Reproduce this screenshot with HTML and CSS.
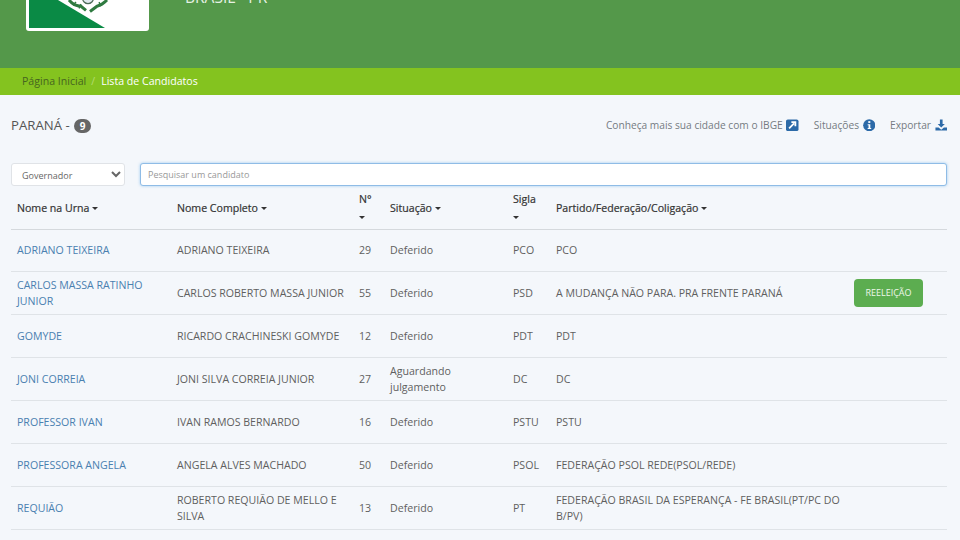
FILE: index.html
```html
<!DOCTYPE html>
<html lang="pt-BR">

<head>
    <meta charset="UTF-8">
    <title>Lista de Candidatos</title>
    <link rel="stylesheet" href="styles.css">
</head>

<body>
    <div class="viewport">
        <header class="top-header">
            <div class="flag-box">
                <svg class="flag" viewBox="0 0 117 27" preserveAspectRatio="none">
                    <rect width="117" height="27" fill="#fff"/>
                    <polygon points="0,0 29,0 76,27 0,27" fill="#0a8a45"/>
                    <path d="M40 0 Q45 6 52 6 L57 10 M78 0 Q73 5 68 6 L61 11" fill="none" stroke="#2f7a40" stroke-width="3"/>
                    <path d="M44 5l3-3M50 8l2-4M72 6l-2-4" fill="none" stroke="#2f7a40" stroke-width="1.5"/>
                    <circle cx="59" cy="-2" r="5.5" fill="#dfe8ee" stroke="#4d6b58" stroke-width="1.2"/>
                </svg>
            </div>
            <div class="header-title">BRASIL - PR</div>
        </header>

        <nav class="crumbs">
            <a class="crumb" href="#">Página Inicial</a>
            <span class="crumb-sep">/</span>
            <span class="crumb-active">Lista de Candidatos</span>
        </nav>

        <main class="content">
            <div class="title-row">
                <h1 class="state-title">PARANÁ - <span class="count-badge">9</span></h1>
                <div class="links">
                    <a class="link-item" href="#">Conheça mais sua cidade com o IBGE
                        <svg class="icon" viewBox="0 0 14 14"><rect width="14" height="13" y="0.5" rx="2" fill="#2c6aa8"/><path d="M3.5 10.5 9 5M6 3.5h4.5V8" stroke="#fff" stroke-width="2" fill="none"/></svg>
                    </a>
                    <a class="link-item" href="#">Situações
                        <svg class="icon" viewBox="0 0 14 14"><circle cx="7" cy="7" r="6.8" fill="#2c6aa8"/><rect x="5.9" y="2.4" width="2.3" height="2" fill="#fff"/><path d="M5.2 5.8h3v4.2h1v1.2H5.2V10h1V7h-1z" fill="#fff"/></svg>
                    </a>
                    <a class="link-item" href="#">Exportar
                        <svg class="icon" viewBox="0 0 14 14"><path d="M5.5 0.5h3v5H11L7 9.5 3 5.5h2.5z" fill="#2c6aa8"/><path d="M0.5 9.5h3.5l3 2.5 3-2.5h3.5v3.5H0.5z" fill="#2c6aa8"/></svg>
                    </a>
                </div>
            </div>

            <div class="filter-row">
                <select class="filter-select">
                    <option>Governador</option>
                </select>
                <input class="search-input" type="text" placeholder="Pesquisar um candidato">
            </div>

            <table class="cand-table">
                <thead>
                    <tr>
                        <th class="col-urna">Nome na Urna <span class="caret"></span></th>
                        <th class="col-nome">Nome Completo <span class="caret"></span></th>
                        <th class="col-num">N° <span class="caret"></span></th>
                        <th class="col-sit">Situação <span class="caret"></span></th>
                        <th class="col-sigla">Sigla <span class="caret"></span></th>
                        <th class="col-partido">Partido/Federação/Coligação <span class="caret"></span></th>
                        <th class="col-extra"></th>
                    </tr>
                </thead>
                <tbody>
                    <tr>
                        <td><a href="#">ADRIANO TEIXEIRA</a></td>
                        <td>ADRIANO TEIXEIRA</td>
                        <td>29</td>
                        <td>Deferido</td>
                        <td>PCO</td>
                        <td>PCO</td>
                        <td></td>
                    </tr>
                    <tr>
                        <td><a href="#">CARLOS MASSA RATINHO JUNIOR</a></td>
                        <td>CARLOS ROBERTO MASSA JUNIOR</td>
                        <td>55</td>
                        <td>Deferido</td>
                        <td>PSD</td>
                        <td>A MUDANÇA NÃO PARA. PRA FRENTE PARANÁ</td>
                        <td><span class="tag-reeleicao">REELEIÇÃO</span></td>
                    </tr>
                    <tr>
                        <td><a href="#">GOMYDE</a></td>
                        <td>RICARDO CRACHINESKI GOMYDE</td>
                        <td>12</td>
                        <td>Deferido</td>
                        <td>PDT</td>
                        <td>PDT</td>
                        <td></td>
                    </tr>
                    <tr>
                        <td><a href="#">JONI CORREIA</a></td>
                        <td>JONI SILVA CORREIA JUNIOR</td>
                        <td>27</td>
                        <td>Aguardando julgamento</td>
                        <td>DC</td>
                        <td>DC</td>
                        <td></td>
                    </tr>
                    <tr>
                        <td><a href="#">PROFESSOR IVAN</a></td>
                        <td>IVAN RAMOS BERNARDO</td>
                        <td>16</td>
                        <td>Deferido</td>
                        <td>PSTU</td>
                        <td>PSTU</td>
                        <td></td>
                    </tr>
                    <tr>
                        <td><a href="#">PROFESSORA ANGELA</a></td>
                        <td>ANGELA ALVES MACHADO</td>
                        <td>50</td>
                        <td>Deferido</td>
                        <td>PSOL</td>
                        <td>FEDERAÇÃO PSOL REDE(PSOL/REDE)</td>
                        <td></td>
                    </tr>
                    <tr>
                        <td><a href="#">REQUIÃO</a></td>
                        <td>ROBERTO REQUIÃO DE MELLO E SILVA</td>
                        <td>13</td>
                        <td>Deferido</td>
                        <td>PT</td>
                        <td>FEDERAÇÃO BRASIL DA ESPERANÇA - FE BRASIL(PT/PC DO B/PV)</td>
                        <td></td>
                    </tr>
                </tbody>
            </table>
        </main>
    </div>
</body>

</html>
```

FILE: styles.css
```css
* {
    margin: 0;
    padding: 0;
    box-sizing: border-box;
}

html, body {
    height: 100%;
    overflow: hidden;
}

body {
    font-family: 'Open Sans', sans-serif;
    font-size: 10.6px;
    color: #5f5f5f;
    background: #f4f7fb;
}

.viewport {
    height: 540px;
    overflow: hidden;
}

.top-header {
    height: 68px;
    background: #54984a;
    display: flex;
    align-items: flex-start;
    padding-left: 26px;
}

.flag-box {
    width: 123px;
    height: 31px;
    background: #fff;
    border-radius: 0 0 3px 3px;
    padding: 0 3px 3px;
}

.flag {
    display: block;
    width: 100%;
    height: 100%;
}

.header-title {
    margin-left: 36px;
    margin-top: -13px;
    font-size: 15.5px;
    line-height: 20px;
    color: #e6f1e3;
}

.crumbs {
    height: 27px;
    background: #84c31f;
    display: flex;
    align-items: center;
    padding: 0 0 1px 22px;
    font-size: 10.6px;
}

.crumb {
    color: #46651f;
    text-decoration: none;
}

.crumb-sep {
    color: #b4dc72;
    margin: 0 6px 0 5px;
}

.crumb-active {
    color: #fff;
}

.content {
    padding: 0 13px 0 11px;
}

.title-row {
    display: flex;
    justify-content: space-between;
    align-items: center;
    height: 61px;
    padding-bottom: 2px;
}

.state-title {
    font-size: 13.2px;
    font-weight: 400;
    color: #555;
}

.count-badge {
    display: inline-block;
    width: 17px;
    height: 14px;
    margin-left: 1px;
    line-height: 14px;
    border-radius: 7px;
    background: #666;
    color: #fff;
    font-size: 10px;
    font-weight: 700;
    text-align: center;
    vertical-align: middle;
}

.links {
    display: flex;
    gap: 15px;
    margin-top: 1px;
}

.link-item {
    color: #757b82;
    text-decoration: none;
    font-size: 10.2px;
    display: flex;
    align-items: center;
    gap: 3.5px;
}

.icon {
    width: 12.5px;
    height: 12.5px;
}

.filter-row {
    display: flex;
    gap: 15px;
    margin-top: 7px;
}

.filter-select {
    width: 114px;
    height: 23px;
    font-family: inherit;
    font-size: 9px;
    color: #666;
    background: #fff;
    border: 1px solid #e0e3e7;
    border-radius: 3px;
    padding: 1px 0 0 6px;
}

.search-input {
    flex: 1;
    height: 23px;
    font-family: inherit;
    font-size: 9px;
    color: #555;
    background: #fff;
    border: 1px solid #8fbce6;
    border-radius: 3px;
    padding-left: 7px;
    box-shadow: 0 0 3px rgba(102, 175, 233, 0.6);
}

.search-input::placeholder {
    color: #999;
}

.cand-table {
    width: 100%;
    border-collapse: collapse;
    table-layout: fixed;
}

.cand-table th {
    text-align: left;
    font-weight: 400;
    color: #333;
    -webkit-text-stroke: 0.2px #333;
    font-size: 10.6px;
    line-height: 17px;
    padding: 5px 6px 3px;
    height: 43px;
    border-bottom: 1px solid #d5d9dd;
    vertical-align: middle;
}

.cand-table td {
    padding: 5px 6px;
    line-height: 16px;
    height: 42.8px;
    border-bottom: 1px solid #dfe3e7;
    vertical-align: middle;
}

.cand-table a {
    color: #4a80b0;
    text-decoration: none;
}

.caret {
    display: inline-block;
    width: 0;
    height: 0;
    vertical-align: middle;
    border-top: 3px solid #333;
    border-left: 3px solid transparent;
    border-right: 3px solid transparent;
}

.col-urna { width: 160px; }
.col-nome { width: 182px; }
.col-num { width: 31px; }
.col-sit { width: 123px; }
.col-sigla { width: 43px; }
.col-partido { width: 298px; }

.tag-reeleicao {
    display: block;
    width: 69px;
    height: 28px;
    margin-bottom: 1px;
    line-height: 28px;
    text-align: center;
    background: #5cad50;
    color: #eef7ea;
    font-size: 9px;
    border-radius: 4px;
}
```
